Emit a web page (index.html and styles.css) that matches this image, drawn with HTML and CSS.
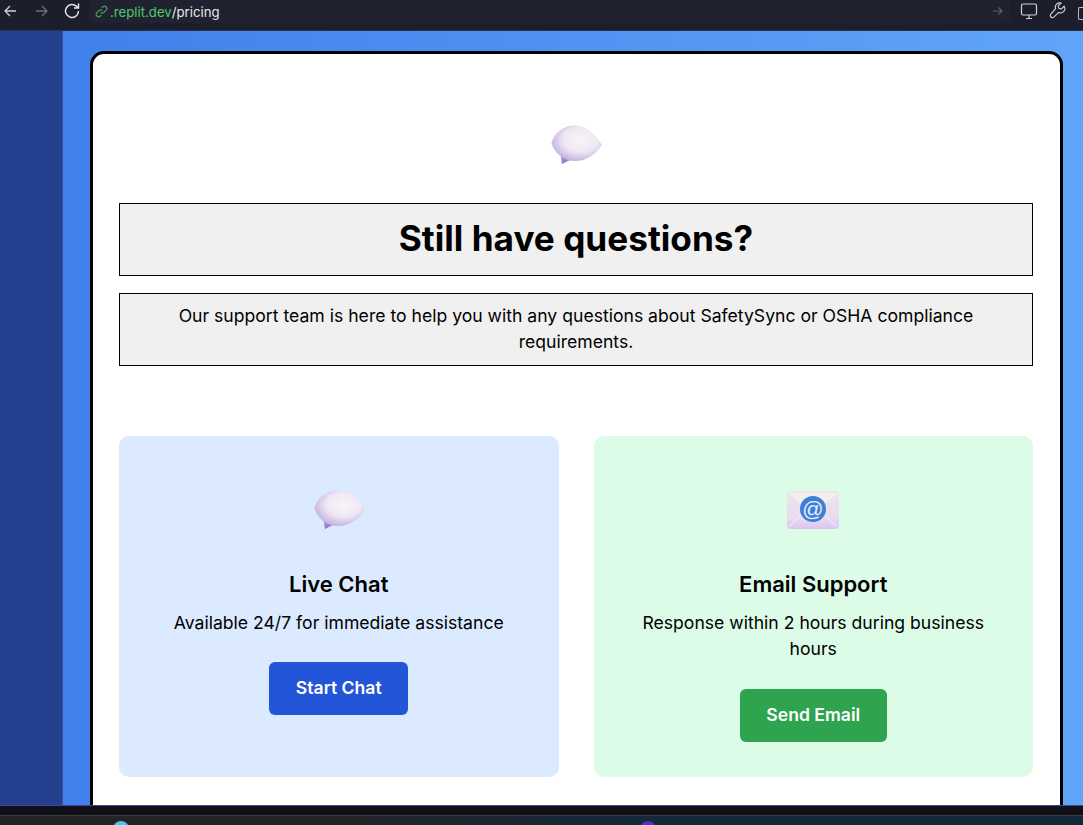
FILE: index.html
```html
<!DOCTYPE html>
<html lang="en">

<head>
    <title>Pricing - SafetySync</title>
    <link rel="stylesheet" href="styles.css">
</head>

<body>
    <svg class="defs" width="0" height="0">
        <defs>
            <radialGradient id="bubble-fill" cx="58%" cy="40%" r="62%">
                <stop offset="0%" stop-color="#f8f4f9"/>
                <stop offset="55%" stop-color="#efe8f4"/>
                <stop offset="100%" stop-color="#c3b0e0"/>
            </radialGradient>
            <linearGradient id="tail-fill" x1="0" y1="0" x2="0" y2="1">
                <stop offset="0%" stop-color="#cbbce2"/>
                <stop offset="100%" stop-color="#8570c4"/>
            </linearGradient>
            <linearGradient id="envelope-fill" x1="0" y1="0" x2="0" y2="1">
                <stop offset="0%" stop-color="#efe5ea"/>
                <stop offset="70%" stop-color="#e8dcef"/>
                <stop offset="100%" stop-color="#d9c5f3"/>
            </linearGradient>
            <g id="chat-bubble">
                <path d="M9 27 L11 39 L21 34 Z" fill="url(#tail-fill)"/>
                <path d="M0.5 18 C3 8 12 0.5 24 0.5 C36 0.5 46 11 51 20 C46 28 36 36 24 36 C13 36 3 28 0.5 18 Z" fill="url(#bubble-fill)"/>
            </g>
        </defs>
    </svg>

    <header class="toolbar">
        <svg class="tool-icon back" viewBox="0 0 16 16"><path d="M14 8H3M8 3L3 8l5 5"/></svg>
        <svg class="tool-icon forward" viewBox="0 0 16 16"><path d="M2 8h11M8 3l5 5-5 5"/></svg>
        <svg class="tool-icon reload" viewBox="0 0 18 18"><path d="M15.5 9a6.5 6.5 0 1 1-2-4.7L15.5 6M15.5 1.5V6H11"/></svg>
        <div class="address">
            <svg class="link-icon" viewBox="0 0 14 14"><path d="M6 8a2.6 2.6 0 0 0 3.7 0l2.2-2.2A2.6 2.6 0 0 0 8.2 2.1L7.2 3.1M8 6a2.6 2.6 0 0 0-3.7 0L2.1 8.2a2.6 2.6 0 0 0 3.7 3.7l1-1"/></svg>
            <span class="host">.replit.dev</span><span class="path">/pricing</span>
            <svg class="go-icon" viewBox="0 0 12 12"><path d="M1 6h9M6.5 2.5L10 6l-3.5 3.5"/></svg>
        </div>
        <svg class="tool-icon monitor" viewBox="0 0 18 18"><path d="M3 2h12a1.5 1.5 0 0 1 1.5 1.5v8A1.5 1.5 0 0 1 15 13H3a1.5 1.5 0 0 1-1.5-1.5v-8A1.5 1.5 0 0 1 3 2ZM9 13v3M6 16.5h6"/></svg>
        <svg class="tool-icon wrench" viewBox="0 0 18 18"><path d="M16 4.5l-3 3-2.5-.8-.8-2.5 3-3a4.5 4.5 0 0 0-5.7 5.8L2 12.9a2.2 2.2 0 0 0 3.1 3.1l5.1-5a4.5 4.5 0 0 0 5.8-6.5Z"/></svg>
        <span class="cut-icon"></span>
    </header>

    <div class="window">
        <aside class="sidebar"></aside>
        <main class="content">
            <section class="panel">
                <div class="hero-icon">
                    <svg width="52" height="40" viewBox="-1 0 52 40"><use href="#chat-bubble"/></svg>
                </div>
                <h1 class="title">Still have questions?</h1>
                <p class="lead">Our support team is here to help you with any questions about SafetySync or OSHA compliance requirements.</p>

                <div class="contact-grid">
                    <div class="contact-card chat-card">
                        <div class="card-icon">
                            <svg width="52" height="40" viewBox="-1 0 52 40"><use href="#chat-bubble"/></svg>
                        </div>
                        <h3>Live Chat</h3>
                        <p>Available 24/7 for immediate assistance</p>
                        <a class="btn btn-blue" href="#">Start Chat</a>
                    </div>
                    <div class="contact-card email-card">
                        <div class="card-icon">
                            <svg width="54" height="40" viewBox="0 0 54 40">
                                <rect x="1" y="1" width="52" height="38" rx="4" fill="url(#envelope-fill)"/>
                                <path d="M3 37 L20 20 M51 37 L34 20" stroke="#f6f1f8" stroke-width="1" fill="none"/>
                                <path d="M2 3 L27 24 L52 3 Z" fill="#f4eef1"/>
                                <circle cx="27" cy="19" r="13" fill="#3f7fd6"/>
                                <text class="at-sign" x="27" y="26" text-anchor="middle">@</text>
                            </svg>
                        </div>
                        <h3>Email Support</h3>
                        <p>Response within 2 hours during business hours</p>
                        <a class="btn btn-green" href="#">Send Email</a>
                    </div>
                </div>
            </section>
        </main>
    </div>

    <div class="window-edge"></div>
    <footer class="taskbar">
        <span class="task-dot dot-blue"></span>
        <span class="task-dot dot-purple"></span>
    </footer>
</body>

</html>
```

FILE: styles.css
```css
* {
    box-sizing: border-box;
}

html,
body {
    height: 100%;
}

body {
    margin: 0;
    display: flex;
    flex-direction: column;
    overflow: hidden;
    font-family: Inter, "Liberation Sans", sans-serif;
    background-color: #0f1018;
    color: black;
}

.defs {
    display: block;
    height: 0;
}

/* browser chrome */
.toolbar {
    height: 31px;
    flex: none;
    display: flex;
    align-items: flex-start;
    background-color: #1c1f2b;
    border-bottom: 1px solid #2c2f48;
}

.tool-icon {
    flex: none;
    fill: none;
    stroke: #cfd1d6;
    stroke-width: 1.3;
}

.back {
    width: 16px;
    height: 16px;
    margin: 3px 0 0 2px;
}

.forward {
    width: 16px;
    height: 16px;
    margin: 3px 0 0 16px;
    stroke: #6d7078;
}

.reload {
    width: 18px;
    height: 18px;
    margin: 2px 0 0 13px;
    stroke: #e4e5e8;
    stroke-width: 1.5;
}

.address {
    width: 920px;
    height: 23px;
    margin-left: 9px;
    padding-left: 5px;
    display: flex;
    align-items: center;
    flex: none;
    background-color: #20232f;
    border-radius: 0 0 5px 5px;
    font-size: 13.2px;
    position: relative;
}

.link-icon {
    width: 13px;
    height: 13px;
    margin-right: 2px;
    fill: none;
    stroke: #4b9e5e;
    stroke-width: 1.3;
}

.host {
    color: #4fc96a;
}

.path {
    color: #e6e7ea;
}

.go-icon {
    width: 12px;
    height: 12px;
    position: absolute;
    top: 5px;
    right: 6px;
    fill: none;
    stroke: #5c5f69;
    stroke-width: 1.2;
}

.monitor {
    width: 18px;
    height: 18px;
    margin: 2px 0 0 10px;
    stroke-width: 1.2;
}

.wrench {
    width: 17px;
    height: 17px;
    margin: 2px 0 0 11px;
    stroke-width: 1.2;
}

.cut-icon {
    width: 8px;
    height: 13px;
    margin: 7px 0 0 12px;
    border: 1px solid #b9bbc1;
    border-right: none;
    border-radius: 2px 0 0 2px;
}

/* page */
.window {
    flex: 1;
    min-height: 0;
    display: flex;
    overflow: hidden;
}

.sidebar {
    width: 63px;
    flex: none;
    background-color: #23408f;
    border-right: 1px solid #3b4fa8;
}

.content {
    flex: 1;
    min-width: 0;
    padding: 20px 20px 0 27px;
    background: linear-gradient(to right, #4080ea, #60a5fa);
}

.panel {
    height: 900px;
    padding: 58px 27px 0 26px;
    background-color: white;
    border: 3px solid black;
    border-radius: 14px;
}

.hero-icon {
    height: 66px;
    margin-bottom: 25px;
    display: flex;
    align-items: center;
    justify-content: center;
}

.title {
    margin: 0;
    padding: 11px 12px 13px;
    font-size: 35.2px;
    font-weight: 700;
    line-height: 47px;
    text-align: center;
    background-color: #f0f0f0;
    border: 1px solid black;
}

.lead {
    margin: 17px 0 0;
    padding: 9px 16px;
    font-size: 17.6px;
    line-height: 1.5;
    text-align: center;
    background-color: #f0f0f0;
    border: 1px solid black;
}

.contact-grid {
    margin-top: 70px;
    display: grid;
    grid-template-columns: 1fr 1fr;
    gap: 35px;
}

.contact-card {
    padding: 35px;
    text-align: center;
    border-radius: 10px;
}

.chat-card {
    background-color: #dbeafe;
}

.email-card {
    background-color: #dcfce7;
}

.card-icon {
    height: 78px;
    margin-bottom: 20px;
    display: flex;
    align-items: center;
    justify-content: center;
}

.contact-card h3 {
    margin: 0;
    font-size: 22px;
    font-weight: 600;
    line-height: 30px;
}

.contact-card p {
    margin: 11px 0 0;
    font-size: 17.6px;
    line-height: 1.5;
}

.btn {
    display: inline-block;
    margin-top: 26px;
    padding: 0 26.5px;
    height: 53px;
    font-size: 17.6px;
    font-weight: 600;
    line-height: 52px;
    color: white;
    text-decoration: none;
    border-radius: 6px;
}

.btn-blue {
    background-color: #2355d8;
}

.btn-green {
    background-color: #2ea44f;
}

.at-sign {
    font-family: "Liberation Sans", sans-serif;
    font-size: 21px;
    fill: #e8eefb;
}

/* bottom of the desktop */
.window-edge {
    height: 10px;
    flex: none;
    background-color: #0f1018;
    border-top: 1px solid #4c3f96;
}

.taskbar {
    height: 10px;
    flex: none;
    position: relative;
    overflow: hidden;
    background: linear-gradient(to right, #232425 30%, #14283a 60%);
    border-top: 1px solid #3c3d40;
}

.task-dot {
    position: absolute;
    top: 5px;
    width: 16px;
    height: 16px;
    border-radius: 50%;
}

.dot-blue {
    left: 113px;
    background-color: #4cc2f1;
}

.dot-purple {
    left: 640px;
    background-color: #5b2fb8;
}
```
